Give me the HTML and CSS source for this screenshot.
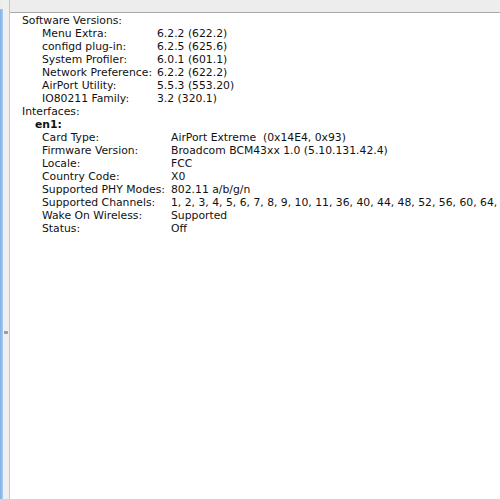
FILE: index.html
```html
<!DOCTYPE html>
<html>
<head>
<meta charset="utf-8">
<link rel="stylesheet" href="styles.css">
</head>
<body>
<div class="sidebar">
  <div class="blue"></div>
  <div class="gutter"><span class="grip"></span></div>
</div>
<div class="content">
  <div class="topbar"></div>
  <div class="panel">
    <div class="line h1">Software Versions:</div>
    <div class="grid sw">
      <div>Menu Extra:</div><div>6.2.2 (622.2)</div>
      <div>configd plug-in:</div><div>6.2.5 (625.6)</div>
      <div>System Profiler:</div><div>6.0.1 (601.1)</div>
      <div>Network Preference:</div><div>6.2.2 (622.2)</div>
      <div>AirPort Utility:</div><div>5.5.3 (553.20)</div>
      <div>IO80211 Family:</div><div>3.2 (320.1)</div>
    </div>
    <div class="line h1">Interfaces:</div>
    <div class="line h2">en1:</div>
    <div class="grid ifc">
      <div>Card Type:</div><div>AirPort Extreme&nbsp; (0x14E4, 0x93)</div>
      <div>Firmware Version:</div><div>Broadcom BCM43xx 1.0 (5.10.131.42.4)</div>
      <div>Locale:</div><div>FCC</div>
      <div>Country Code:</div><div>X0</div>
      <div>Supported PHY Modes:</div><div>802.11 a/b/g/n</div>
      <div>Supported Channels:</div><div>1, 2, 3, 4, 5, 6, 7, 8, 9, 10, 11, 36, 40, 44, 48, 52, 56, 60, 64,</div>
      <div>Wake On Wireless:</div><div>Supported</div>
      <div>Status:</div><div>Off</div>
    </div>
  </div>
</div>
</body>
</html>
```
FILE: styles.css
```css
html, body {
  margin: 0;
  padding: 0;
  height: 100%;
  overflow: hidden;
}
body {
  background: #ececec;
  font-family: "DejaVu Sans", sans-serif;
  font-size: 10.8px;
  color: #111;
  display: flex;
}
.sidebar {
  display: flex;
  flex: none;
  background: #ededed;
}
.blue {
  width: 3px;
  margin-top: 9px;
  border-radius: 1px 1px 0 0;
  background: linear-gradient(to right, #7fb0e6, #a9caef);
}
.gutter {
  width: 6px;
  background: #efefef;
  border-right: 1px solid #c6c6c6;
  position: relative;
}
.grip {
  position: absolute;
  left: 1px;
  top: 331px;
  width: 4px;
  height: 3px;
  background: #9a9a9a;
  border-radius: 1px;
}
.content {
  flex: 1;
  min-width: 0;
  display: flex;
  flex-direction: column;
}
.topbar {
  height: 12px;
  background: #ededed;
  border-bottom: 1px solid #a9a9a9;
  flex: none;
}
.panel {
  flex: 1;
  background: #fff;
  padding: 1px 0 0 12px;
  white-space: nowrap;
  overflow: hidden;
}
.line, .grid > div {
  height: 13px;
  line-height: 13px;
}
.h2 {
  padding-left: 13px;
  font-weight: bold;
}
.grid {
  display: grid;
  padding-left: 20px;
}
.sw {
  grid-template-columns: 115px auto;
}
.ifc {
  grid-template-columns: 129px auto;
}
```
